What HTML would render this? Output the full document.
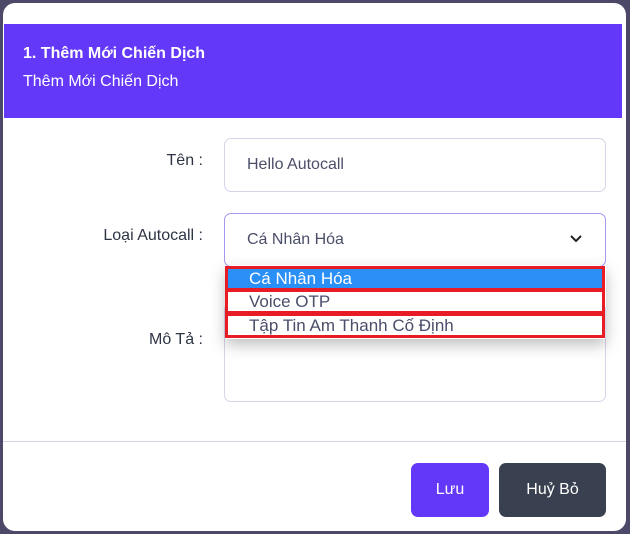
<!DOCTYPE html>
<html><head><meta charset="utf-8"><style>
*{box-sizing:border-box;margin:0;padding:0}
body{width:630px;height:534px;background:#4c4868;font-family:"Liberation Sans",sans-serif;position:relative;overflow:hidden}
.modal{position:absolute;left:3px;top:3px;width:623px;height:528px;background:#fff;border-radius:12px;overflow:hidden}
.hdr{position:absolute;left:1px;top:21px;width:618px;height:94px;background:#6338f8;color:#fff}
.h1{position:absolute;left:19px;top:21px;font-size:16px;font-weight:bold}
.h2{position:absolute;left:19px;top:49px;font-size:16px}
.lbl{position:absolute;font-size:16px;color:#2d3444;text-align:right;width:200px;left:0}
.inp{position:absolute;left:221px;width:382px;border:1px solid #d7d3e8;border-radius:7px;font-size:16px;color:#4a4e69;padding-left:22px}
.opt{position:absolute;left:222px;width:380px;font-size:17px;color:#4a4e69;padding-left:21px;line-height:19px;border:3px solid #e81c24}
.btn{position:absolute;top:460px;height:54px;border-radius:7px;color:#fff;font-size:16px;text-align:center;line-height:54px}
</style></head><body>
<div class="modal">
<div class="hdr"><div class="h1">1. Thêm Mới Chiến Dịch</div><div class="h2">Thêm Mới Chiến Dịch</div></div>
<div class="lbl" style="top:149px">Tên :</div>
<div class="inp" style="top:135px;height:54px;line-height:52px">Hello Autocall</div>
<div class="lbl" style="top:224px">Loại Autocall :</div>
<div class="inp" style="top:210px;height:54px;line-height:52px;border-color:#a896f5">Cá Nhân Hóa
<svg style="position:absolute;right:22px;top:20px" width="14" height="10" viewBox="0 0 14 10"><path d="M2 2l5 5 5-5" stroke="#222" stroke-width="2" fill="none"/></svg></div>
<div class="lbl" style="top:328px">Mô Tả :</div>
<div class="inp" style="top:300px;height:99px"></div>
<div style="position:absolute;left:222px;top:262px;width:381px;height:74px;box-shadow:0 6px 14px rgba(0,0,0,.25)"></div>
<div class="opt" style="top:263px;background:#2a8ff7;color:#fff;height:25px">Cá Nhân Hóa</div>
<div class="opt" style="top:286px;background:#fff;height:25px">Voice OTP</div>
<div class="opt" style="top:310px;background:#fff;height:25px">Tập Tin Am Thanh Cố Định</div>
<div style="position:absolute;left:0;top:438px;width:623px;height:1px;background:#d6d2e6"></div>
<div class="btn" style="left:408px;width:78px;background:#6338f8">Lưu</div>
<div class="btn" style="left:496px;width:107px;background:#394150">Huỷ Bỏ</div>
</div>
</body></html>
